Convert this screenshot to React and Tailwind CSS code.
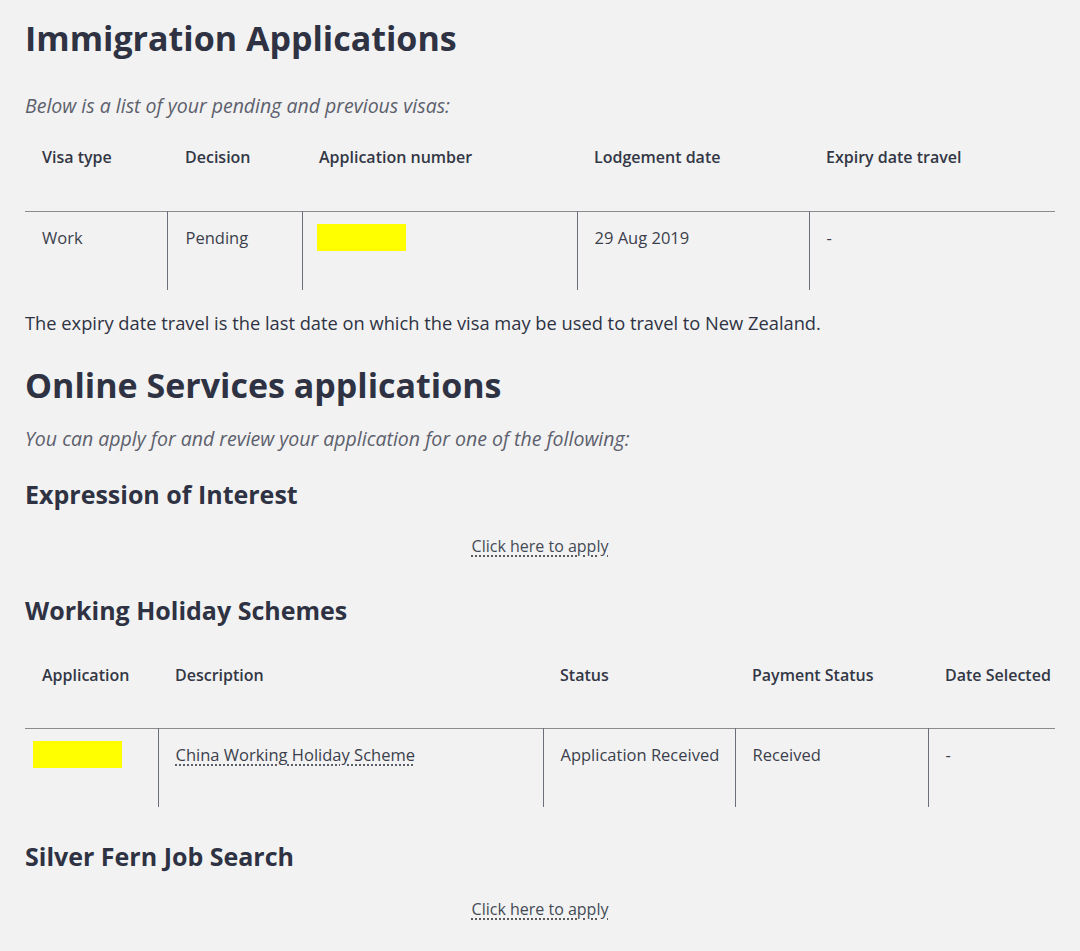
const body = { fontFamily: '"Open Sans", "Noto Sans", sans-serif' };

const Redacted = () => <span className="inline-block h-[27px] w-[89px] bg-[#ffff00] align-middle" />;

const ApplyLink = () => (
  <div className="flex justify-center">
    <a
      href="#"
      className="text-[16px] leading-[24px] text-[#444a55] underline decoration-dotted decoration-[#333] underline-offset-4"
    >
      Click here to apply
    </a>
  </div>
);

export default function App() {
  return (
    <div className="min-h-screen bg-[#f2f2f2] px-[25px] pt-[16px] pb-10 text-[#3b3f4c]" style={body}>
      <h1 className="text-[34px] font-bold leading-[44px] text-[#2e3243]">Immigration Applications</h1>
      <p className="mt-[34px] text-[19.5px] leading-[24px] italic text-[#5c606c]">
        Below is a list of your pending and previous visas:
      </p>

      {/* Visas */}
      <table className="w-full border-collapse text-[16px]">
        <thead>
          <tr className="h-[93px] text-left align-top text-[#333745]">
            <th className="w-[142px] pl-[17px] pt-[27px] font-semibold">Visa type</th>
            <th className="w-[135px] pl-[18px] pt-[27px] font-semibold">Decision</th>
            <th className="w-[275px] pl-[17px] pt-[27px] font-semibold">Application number</th>
            <th className="w-[232px] pl-[17px] pt-[27px] font-semibold">Lodgement date</th>
            <th className="pl-[17px] pt-[27px] font-semibold">Expiry date travel</th>
          </tr>
        </thead>
        <tbody className="text-[16.5px]">
          <tr className="h-[79px] border-t border-[#8c8c8c] align-top">
            <td className="pl-[17px] pt-[14px]">Work</td>
            <td className="border-l border-[#6b6f7c] pl-[18px] pt-[14px]">Pending</td>
            <td className="border-l border-[#6b6f7c] pl-[14px] pt-[12px]"><Redacted /></td>
            <td className="border-l border-[#6b6f7c] pl-[17px] pt-[14px]">29 Aug 2019</td>
            <td className="border-l border-[#6b6f7c] pl-[17px] pt-[14px]">-</td>
          </tr>
        </tbody>
      </table>

      <p className="mt-[19px] text-[18.3px] leading-[27px] text-[#2e3243]">
        The expiry date travel is the last date on which the visa may be used to travel to New Zealand.
      </p>

      <h1 className="mt-[27px] text-[34px] font-bold leading-[44px] text-[#2e3243]">Online Services applications</h1>
      <p className="mt-[20px] text-[19.5px] leading-[24px] italic text-[#5c606c]">
        You can apply for and review your application for one of the following:
      </p>

      <h2 className="mt-[27px] text-[25px] font-bold leading-[32px] text-[#2e3243]">Expression of Interest</h2>
      <div className="mt-[24px]">
        <ApplyLink />
      </div>

      <h2 className="mt-[36px] text-[25px] font-bold leading-[32px] text-[#2e3243]">Working Holiday Schemes</h2>

      {/* Working holiday applications */}
      <table className="w-full border-collapse text-[16px]">
        <thead>
          <tr className="h-[102px] text-left align-top text-[#333745]">
            <th className="w-[133px] pl-[17px] pt-[37px] font-semibold">Application</th>
            <th className="w-[385px] pl-[17px] pt-[37px] font-semibold">Description</th>
            <th className="w-[192px] pl-[17px] pt-[37px] font-semibold">Status</th>
            <th className="w-[193px] pl-[17px] pt-[37px] font-semibold">Payment Status</th>
            <th className="pl-[17px] pt-[37px] font-semibold">Date Selected</th>
          </tr>
        </thead>
        <tbody className="text-[16.5px]">
          <tr className="h-[79px] border-t border-[#8c8c8c] align-top">
            <td className="pl-[8px] pt-[12px]"><Redacted /></td>
            <td className="border-l border-[#6b6f7c] pl-[17px] pt-[14px]">
              <a href="#" className="underline decoration-dotted underline-offset-4">China Working Holiday Scheme</a>
            </td>
            <td className="border-l border-[#6b6f7c] pl-[17px] pt-[14px]">Application Received</td>
            <td className="border-l border-[#6b6f7c] pl-[17px] pt-[14px]">Received</td>
            <td className="border-l border-[#6b6f7c] pl-[17px] pt-[14px]">-</td>
          </tr>
        </tbody>
      </table>

      <h2 className="mt-[33px] text-[25px] font-bold leading-[32px] text-[#2e3243]">Silver Fern Job Search</h2>
      <div className="mt-[25px]">
        <ApplyLink />
      </div>
    </div>
  );
}
